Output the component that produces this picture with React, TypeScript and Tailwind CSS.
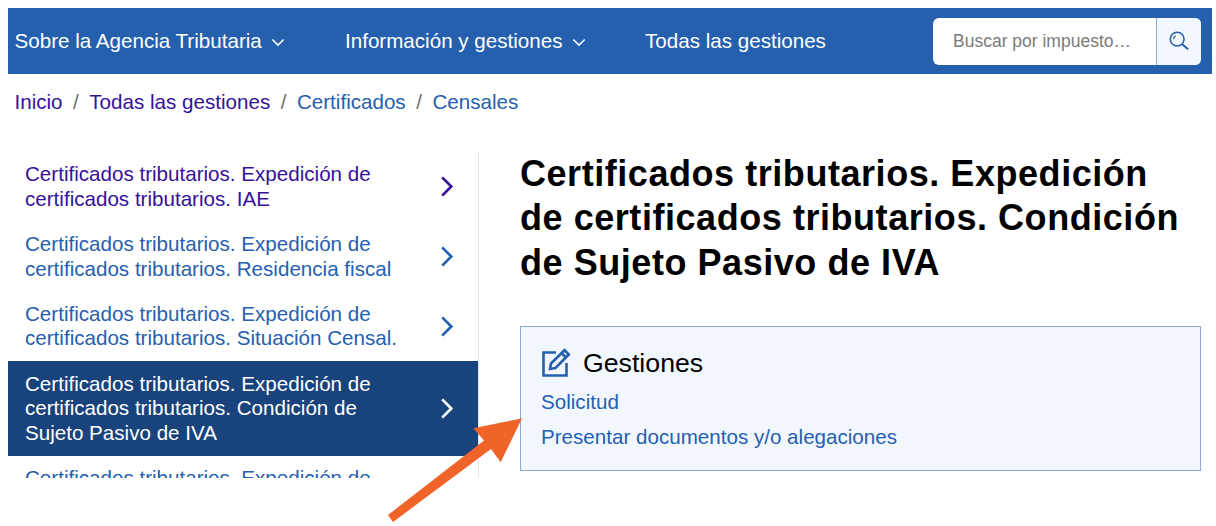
import React from "react";

const Chevron = ({ className }: { className: string }) => (
  <svg viewBox="0 0 14 24" className={className} fill="none" stroke="currentColor" strokeWidth="2.8">
    <path d="M2 2.500l9.500 9.500L2 21.500" />
  </svg>
);
const Down = () => (
  <svg viewBox="0 0 16 10" className="w-[14px] h-[9px] ml-[9px] mt-[3px]" fill="none" stroke="currentColor" strokeWidth="1.8">
    <path d="M1.5 1.5L8 8l6.500-6.500" />
  </svg>
);

const items = [
  { t: "Certificados tributarios. Expedición de certificados tributarios. IAE", c: "text-[#35129a]" },
  { t: "Certificados tributarios. Expedición de certificados tributarios. Residencia fiscal", c: "text-[#2560ae]" },
  { t: "Certificados tributarios. Expedición de certificados tributarios. Situación Censal.", c: "text-[#2560ae]" },
  { t: "Certificados tributarios. Expedición de certificados tributarios. Condición de Sujeto Pasivo de IVA", c: "text-white bg-[#19437c]" },
  { t: "Certificados tributarios. Expedición de certificados tributarios. Obligaciones", c: "text-[#2560ae]" },
];

export default function App() {
  return (
    <div className="relative w-[1216px] h-[526px] overflow-hidden bg-white pl-2 pr-1 pt-2 font-['Liberation_Sans',Arial,sans-serif]">
      <header className="flex items-center h-[66px] bg-[#2560ae] text-white text-[20.600px] pl-[6.500px] pr-[11px]">
        <span className="flex items-center w-[330.500px]">Sobre la Agencia Tributaria<Down /></span>
        <span className="flex items-center w-[300px]">Información y gestiones<Down /></span>
        <span>Todas las gestiones</span>
        <div className="ml-auto flex h-[47px] w-[268px] rounded-[6px] overflow-hidden bg-white">
          <div className="flex-1 flex items-center pl-[20px] text-[17.500px] text-[#7b7b7b]">Buscar por impuesto…</div>
          <div className="w-[45px] flex items-center justify-center bg-[#f2f7fe] border-l border-[#8fa9d6]">
            <svg viewBox="0 0 24 24" className="w-[22px] h-[22px] text-[#2560ae]" fill="none" stroke="currentColor" strokeWidth="1.700">
              <circle cx="10" cy="10" r="7.500" />
              <path d="M15.500 15.500l6.500 5.500" strokeWidth="2.200" />
              <path d="M6 10a4 4 0 0 1 2.500-3.500" strokeWidth="1.400" />
            </svg>
          </div>
        </div>
      </header>

      <nav className="flex items-center h-[56px] pl-[6.500px] text-[20.600px] text-[#6f6f6f]">
        <span className="text-[#35129a]">Inicio</span>
        <span className="mx-[10.500px]">/</span>
        <span className="text-[#35129a]">Todas las gestiones</span>
        <span className="mx-[10.500px]">/</span>
        <span className="text-[#2560ae]">Certificados</span>
        <span className="mx-[10.500px]">/</span>
        <span className="text-[#2560ae]">Censales</span>
      </nav>

      <div className="flex mt-[22px]">
        <aside className="w-[471px] h-[326px] overflow-hidden border-r border-[#e4e4e4] shrink-0">
          {items.map((it, i) => (
            <div key={i} className={`flex items-center pl-[17px] pr-[22px] py-[10.400px] text-[20.600px] leading-[24.500px] ${it.c}`}>
              <span className="w-[372px]">{it.t}</span>
              <Chevron className="w-[16px] h-[23px] ml-auto mr-[1px]" />
            </div>
          ))}
        </aside>

        <main className="flex-1 pl-[41px] pr-[11px]">
          <h1 className="max-w-[670px] text-[36px] leading-[44.600px] font-bold text-black tracking-[0.55px] mt-[-0.300px]">
            Certificados tributarios. Expedición de certificados tributarios. Condición de Sujeto Pasivo de IVA
          </h1>
          <section className="mt-[40.500px] h-[145px] border border-[#8fa9d6] bg-[#f2f7fe] pl-[20px] pt-[20px]">
            <div className="flex items-center h-[32px] gap-[12px] text-[26.700px] text-black">
              <svg viewBox="0 0 29 29" className="w-[29px] h-[29px] ml-[1px] text-[#2560ae]" fill="none" stroke="currentColor" strokeWidth="2.600">
                <path d="M14 4.500H1.500v23h23V15" />
                <path d="M8 21l1-5.500L22.500 2.200l4.300 4.300L13.500 20z" />
                <path d="M19.500 5l4.500 4.500" />
              </svg>
              Gestiones
            </div>
            <div className="mt-[11px] text-[20.600px] leading-[24px] text-[#2560ae]">Solicitud</div>
            <div className="mt-[11px] text-[20.600px] leading-[24px] text-[#2560ae]">Presentar documentos y/o alegaciones</div>
          </section>
        </main>
      </div>

      <svg className="absolute left-[380px] top-[410px] w-[150px] h-[116px] text-[#f0642a]" viewBox="0 0 150 116" fill="currentColor">
        <path d="M142 8.300L93.300 18.300 104 30.500 8 105l5 7 98-73 9.700 13.300z" />
      </svg>
    </div>
  );
}
